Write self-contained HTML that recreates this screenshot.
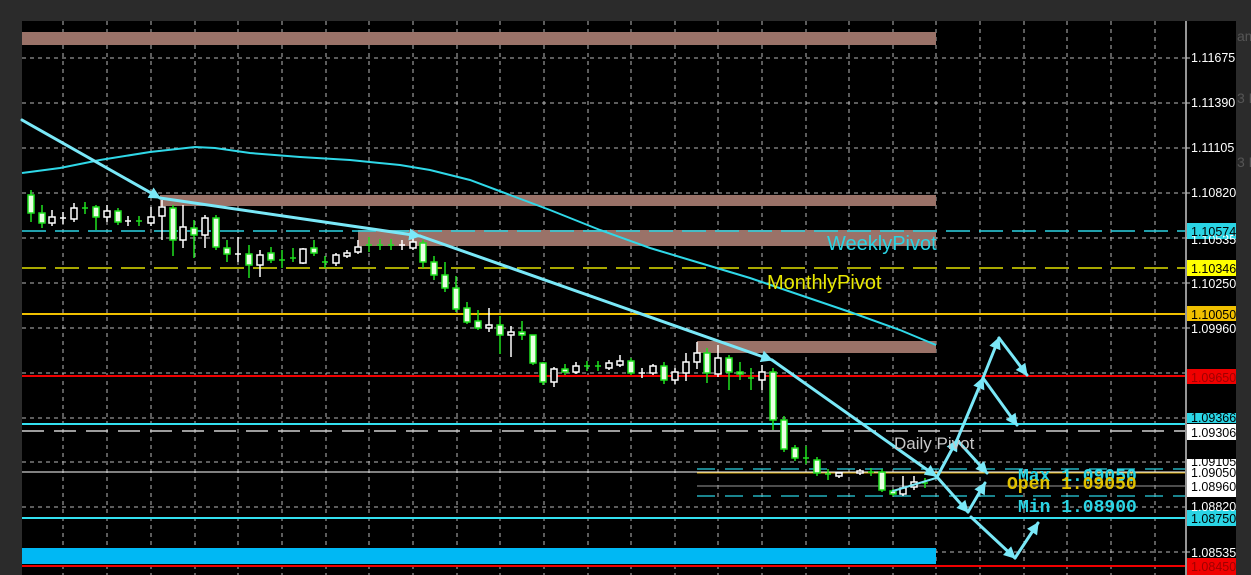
<!DOCTYPE html>
<html><head><meta charset="utf-8"><style>
html,body{margin:0;padding:0;background:#2b2b2b;width:1251px;height:575px;overflow:hidden}
svg{display:block}
.g{stroke:#1fe01f;fill:#eaffe4;stroke-width:1.5}
.w{stroke:#fff;fill:#000;stroke-width:1.5}
.gl{stroke:#1fe01f;stroke-width:1.5}
.wl{stroke:#fff;stroke-width:1.5}
.ax{font-family:"Liberation Sans",sans-serif;font-size:12.5px;fill:#fff}
</style></head><body>
<svg width="1251" height="575" viewBox="0 0 1251 575" xmlns="http://www.w3.org/2000/svg">
<rect x="0" y="0" width="1251" height="575" fill="#2b2b2b"/>
<rect x="22" y="21" width="1214" height="554" fill="#000"/>
<g stroke="#b8b8b8" stroke-width="1" stroke-dasharray="4,4">
<path d="M22 58H1185M22 103H1185M22 148H1185M22 193H1185M22 238H1185M22 283H1185M22 328H1185M22 373H1185M22 418H1185M22 462H1185M22 507H1185M22 552H1185"/>
<path d="M63 21V575M107 21V575M151 21V575M195 21V575M238 21V575M282 21V575M326 21V575M369 21V575M413 21V575M457 21V575M500 21V575M544 21V575M588 21V575M631 21V575M675 21V575M718 21V575M762 21V575M806 21V575M849 21V575M893 21V575M936 21V575M980 21V575M1024 21V575M1067 21V575M1111 21V575M1155 21V575"/>
</g>
<rect x="22" y="32" width="914" height="13" fill="#9a7268"/>
<rect x="160" y="195" width="776" height="11" fill="#9a7268"/>
<rect x="358" y="230" width="578" height="16" fill="#9a7268"/>
<rect x="697" y="341" width="239" height="12" fill="#9a7268"/>
<rect x="22" y="548" width="914" height="16" fill="#00b8f4"/>
<path d="M22 231H1185" stroke="#2ad4e4" stroke-width="1.5" stroke-dasharray="24,9"/>
<path d="M22 268H1185" stroke="#e0e000" stroke-width="1.5" stroke-dasharray="24,9"/>
<path d="M22 314H1185" stroke="#f0c000" stroke-width="2"/>
<path d="M22 376H1185" stroke="#f00000" stroke-width="2"/>
<path d="M22 424H1185" stroke="#33e0f0" stroke-width="2"/>
<path d="M22 431H1185" stroke="#d0d0d0" stroke-width="1.5" stroke-dasharray="22,10"/>
<path d="M697 469H1185" stroke="#2ad4e4" stroke-width="1.2" stroke-dasharray="18,10"/>
<path d="M22 472H1185" stroke="#ffffff" stroke-width="1"/>
<path d="M697 473H1185" stroke="#d0a000" stroke-width="1"/>
<path d="M697 486H1185" stroke="#9a9a9a" stroke-width="1"/>
<path d="M697 496H1185" stroke="#2ad4e4" stroke-width="1.2" stroke-dasharray="18,10"/>
<path d="M22 518H1185" stroke="#33e0f0" stroke-width="2"/>
<path d="M22 566H1185" stroke="#f00000" stroke-width="2"/>
<polyline fill="none" stroke="#2fd8e8" stroke-width="2" points="22,173 60,168 100,160 150,152 195,147 215,148 250,153 300,157 350,160 400,165 430,170 470,180 510,195 550,210 600,230 650,248 700,263 750,278 800,295 850,312 900,330 936,345"/>
<g>
<path class="gl" d="M31 190V222"/><rect class="g" x="28" y="195" width="6" height="18"/>
<path class="gl" d="M42 205V228"/><rect class="g" x="39" y="213" width="6" height="10"/>
<path class="wl" d="M52 210V226"/><rect class="w" x="49" y="217" width="6" height="6"/>
<path class="wl" d="M63 212V224M60 218H66"/>
<path class="wl" d="M74 203V222"/><rect class="w" x="71" y="208" width="6" height="11"/>
<path class="gl" d="M85 202V214M82 208H88"/>
<path class="gl" d="M96 205V230"/><rect class="g" x="93" y="207" width="6" height="10"/>
<path class="wl" d="M107 205V222"/><rect class="w" x="104" y="211" width="6" height="6"/>
<path class="gl" d="M118 208V225"/><rect class="g" x="115" y="211" width="6" height="11"/>
<path class="wl" d="M128 216V226M125 221H131"/>
<path class="gl" d="M139 216V226M136 221H142"/>
<path class="wl" d="M151 207V226"/><rect class="w" x="148" y="217" width="6" height="6"/>
<path class="wl" d="M162 200V240"/><rect class="w" x="159" y="207" width="6" height="9"/>
<path class="gl" d="M173 205V256"/><rect class="g" x="170" y="208" width="6" height="32"/>
<path class="wl" d="M183 205V248"/><rect class="w" x="180" y="227" width="6" height="13"/>
<path class="gl" d="M194 220V258"/><rect class="g" x="191" y="228" width="6" height="7"/>
<path class="wl" d="M205 215V248"/><rect class="w" x="202" y="218" width="6" height="17"/>
<path class="gl" d="M216 215V250"/><rect class="g" x="213" y="218" width="6" height="29"/>
<path class="gl" d="M227 240V262"/><rect class="g" x="224" y="248" width="6" height="6"/>
<path class="wl" d="M238 237V262M235 254H241"/>
<path class="gl" d="M249 245V278"/><rect class="g" x="246" y="254" width="6" height="11"/>
<path class="wl" d="M260 250V277"/><rect class="w" x="257" y="255" width="6" height="10"/>
<path class="gl" d="M271 247V263"/><rect class="g" x="268" y="253" width="6" height="7"/>
<path class="gl" d="M282 250V268M279 260H285"/>
<path class="gl" d="M293 248V262M290 258H296"/>
<path class="wl" d="M303 248V264"/><rect class="w" x="300" y="249" width="6" height="14"/>
<path class="gl" d="M314 240V256"/><rect class="g" x="311" y="248" width="6" height="5"/>
<path class="gl" d="M325 256V268M322 262H328"/>
<path class="wl" d="M336 253V266"/><rect class="w" x="333" y="255" width="6" height="8"/>
<path class="wl" d="M347 250V258"/><rect class="w" x="344" y="253" width="6" height="3"/>
<path class="wl" d="M358 240V254"/><rect class="w" x="355" y="247" width="6" height="5"/>
<path class="gl" d="M369 237V252M366 245H372"/>
<path class="gl" d="M380 239V250M377 245H383"/>
<path class="gl" d="M391 239V250M388 245H394"/>
<path class="wl" d="M402 240V250M399 245H405"/>
<path class="wl" d="M413 238V250"/><rect class="w" x="410" y="242" width="6" height="6"/>
<path class="gl" d="M423 240V268"/><rect class="g" x="420" y="243" width="6" height="19"/>
<path class="gl" d="M434 256V280"/><rect class="g" x="431" y="262" width="6" height="13"/>
<path class="gl" d="M445 262V292"/><rect class="g" x="442" y="275" width="6" height="13"/>
<path class="gl" d="M456 276V312"/><rect class="g" x="453" y="288" width="6" height="21"/>
<path class="gl" d="M467 302V324"/><rect class="g" x="464" y="308" width="6" height="14"/>
<path class="gl" d="M478 310V330"/><rect class="g" x="475" y="321" width="6" height="7"/>
<path class="wl" d="M489 308V332"/><rect class="w" x="486" y="325" width="6" height="3"/>
<path class="gl" d="M500 316V354"/><rect class="g" x="497" y="325" width="6" height="10"/>
<path class="wl" d="M511 326V357"/><rect class="w" x="508" y="332" width="6" height="3"/>
<path class="gl" d="M522 321V340"/><rect class="g" x="519" y="332" width="6" height="3"/>
<path class="gl" d="M533 335V365"/><rect class="g" x="530" y="335" width="6" height="28"/>
<path class="gl" d="M543 362V385"/><rect class="g" x="540" y="363" width="6" height="19"/>
<path class="wl" d="M554 367V387"/><rect class="w" x="551" y="369" width="6" height="13"/>
<path class="gl" d="M565 364V375"/><rect class="g" x="562" y="369" width="6" height="3"/>
<path class="wl" d="M576 362V374"/><rect class="w" x="573" y="366" width="6" height="6"/>
<path class="gl" d="M587 361V371M584 366H590"/>
<path class="gl" d="M598 361V371M595 366H601"/>
<path class="wl" d="M609 360V370"/><rect class="w" x="606" y="363" width="6" height="5"/>
<path class="wl" d="M620 355V367"/><rect class="w" x="617" y="361" width="6" height="4"/>
<path class="gl" d="M631 358V375"/><rect class="g" x="628" y="361" width="6" height="12"/>
<path class="wl" d="M642 368V378M639 373H645"/>
<path class="wl" d="M653 364V375"/><rect class="w" x="650" y="366" width="6" height="7"/>
<path class="gl" d="M664 362V384"/><rect class="g" x="661" y="366" width="6" height="14"/>
<path class="wl" d="M675 368V384"/><rect class="w" x="672" y="372" width="6" height="8"/>
<path class="wl" d="M686 353V381"/><rect class="w" x="683" y="362" width="6" height="11"/>
<path class="wl" d="M697 342V369"/><rect class="w" x="694" y="353" width="6" height="9"/>
<path class="gl" d="M707 348V383"/><rect class="g" x="704" y="353" width="6" height="20"/>
<path class="wl" d="M718 345V377"/><rect class="w" x="715" y="358" width="6" height="16"/>
<path class="gl" d="M729 355V390"/><rect class="g" x="726" y="358" width="6" height="14"/>
<path class="gl" d="M740 362V380"/><rect class="g" x="737" y="372" width="6" height="2"/>
<path class="gl" d="M751 368V390M748 378H754"/>
<path class="wl" d="M762 365V390"/><rect class="w" x="759" y="372" width="6" height="8"/>
<path class="gl" d="M773 368V430"/><rect class="g" x="770" y="372" width="6" height="48"/>
<path class="gl" d="M784 416V452"/><rect class="g" x="781" y="420" width="6" height="29"/>
<path class="gl" d="M795 445V461"/><rect class="g" x="792" y="448" width="6" height="10"/>
<path class="gl" d="M806 446V464M803 458H809"/>
<path class="gl" d="M817 457V476"/><rect class="g" x="814" y="460" width="6" height="13"/>
<path class="gl" d="M828 469V480M825 474H831"/>
<path class="wl" d="M839 472V478"/><rect class="w" x="836" y="473" width="6" height="3"/>
<path class="wl" d="M860 469V475"/><rect class="w" x="857" y="471" width="6" height="2"/>
<path class="gl" d="M871 468V476M868 472H874"/>
<path class="gl" d="M882 469V492"/><rect class="g" x="879" y="472" width="6" height="18"/>
<path class="gl" d="M893 489V496"/><rect class="g" x="890" y="491" width="6" height="3"/>
<path class="wl" d="M903 476V496"/><rect class="w" x="900" y="488" width="6" height="6"/>
<path class="wl" d="M914 476V490"/><rect class="w" x="911" y="482" width="6" height="5"/>
<path class="gl" d="M925 478V488M922 483H928"/>
</g>
<defs>
<marker id="ab" viewBox="0 0 10 10" markerWidth="16" markerHeight="12" refX="9" refY="5" orient="auto" markerUnits="userSpaceOnUse"><path d="M0 0L10 5L0 10Z" fill="#7ae8f8"/></marker></defs>
<g fill="none" stroke="#7ae8f8" stroke-width="3" stroke-linecap="round">
<path d="M22 120L160 198" marker-end="url(#ab)"/>
<path d="M160 198L420 236" marker-end="url(#ab)"/>
<path d="M420 236L772 360" marker-end="url(#ab)"/>
<path d="M772 360L936 476" marker-end="url(#ab)"/>
<path d="M937 477L957 440" marker-end="url(#ab)"/>
<path d="M957 440L983 378" marker-end="url(#ab)"/>
<path d="M983 378L999 338" marker-end="url(#ab)"/>
<path d="M999 338L1027 375" marker-end="url(#ab)"/>
<path d="M983 378L1017 425" marker-end="url(#ab)"/>
<path d="M957 440L987 473" marker-end="url(#ab)"/>
<path d="M937 477L968 512" marker-end="url(#ab)"/>
<path d="M968 512L985 483" marker-end="url(#ab)"/>
<path d="M971 517L1015 558" marker-end="url(#ab)"/>
<path d="M1015 558L1038 523" marker-end="url(#ab)"/>
<path d="M893 491L936 478" stroke-width="2"/>
</g>
<text x="827" y="250" font-family="Liberation Sans,sans-serif" font-size="20" fill="#2ad4e4">WeeklyPivot</text>
<text x="767" y="289" font-family="Liberation Sans,sans-serif" font-size="20" fill="#e8e800">MonthlyPivot</text>
<text x="894" y="449" font-family="Liberation Sans,sans-serif" font-size="17" fill="#c8c8c8">Daily Pivot</text>
<g font-family="Liberation Mono,monospace" font-size="18" font-weight="bold">
<text x="1018" y="481" fill="#2ad4e4">Max 1.09050</text>
<text x="1007" y="489" fill="#e0c000">Open 1.09050</text>
<text x="1018" y="512" fill="#2ad4e4">Min 1.08900</text>
</g>
<path d="M1186 21V575" stroke="#c8c8c8" stroke-width="1.5"/>
<g stroke="#c8c8c8"><path d="M1186 58H1190M1186 103H1190M1186 148H1190M1186 193H1190M1186 238H1190M1186 283H1190M1186 328H1190M1186 552H1190"/></g>
<rect x="1187" y="223" width="49" height="16" fill="#2ad4e4"/>
<rect x="1187" y="260" width="49" height="16" fill="#ffff00"/>
<rect x="1187" y="306" width="49" height="15" fill="#f0c000"/>
<rect x="1187" y="369" width="49" height="15" fill="#f00000"/>
<rect x="1187" y="413" width="49" height="10" fill="#2ad4e4"/>
<rect x="1187" y="424" width="49" height="16" fill="#ffffff"/>
<rect x="1187" y="459" width="49" height="38" fill="#ffffff"/>
<rect x="1187" y="510" width="49" height="16" fill="#2ad4e4"/>
<rect x="1187" y="558" width="49" height="17" fill="#f00000"/>
<g class="ax">
<text x="1191" y="62">1.11675</text>
<text x="1191" y="107">1.11390</text>
<text x="1191" y="152">1.11105</text>
<text x="1191" y="197">1.10820</text>
<text x="1191" y="244">1.10535</text>
<text x="1191" y="236" fill="#000">1.10574</text>
<text x="1191" y="273" fill="#000">1.10346</text>
<text x="1191" y="288">1.10250</text>
<text x="1191" y="319" fill="#000">1.10050</text>
<text x="1191" y="333">1.09960</text>
<text x="1191" y="382" fill="#a00000">1.09650</text>
<text x="1191" y="422" fill="#000">1.09366</text>
<text x="1191" y="437" fill="#000">1.09306</text>
<text x="1191" y="466" fill="#000">1.09105</text>
<text x="1191" y="477" fill="#000">1.09050</text>
<text x="1191" y="491" fill="#000">1.08960</text>
<text x="1191" y="511">1.08820</text>
<text x="1191" y="523" fill="#000">1.08750</text>
<text x="1191" y="557">1.08535</text>
<text x="1191" y="571" fill="#a00000">1.08450</text>
</g>
<rect x="1236" y="0" width="15" height="575" fill="#2b2b2b"/>
<rect x="0" y="0" width="1251" height="21" fill="#2b2b2b"/>
<g font-family="Liberation Sans,sans-serif" font-size="14" fill="#555">
<text x="1237" y="41">am</text>
<text x="1237" y="103">3 K</text>
<text x="1237" y="167">3 K</text>
</g>
</svg>
</body></html>
